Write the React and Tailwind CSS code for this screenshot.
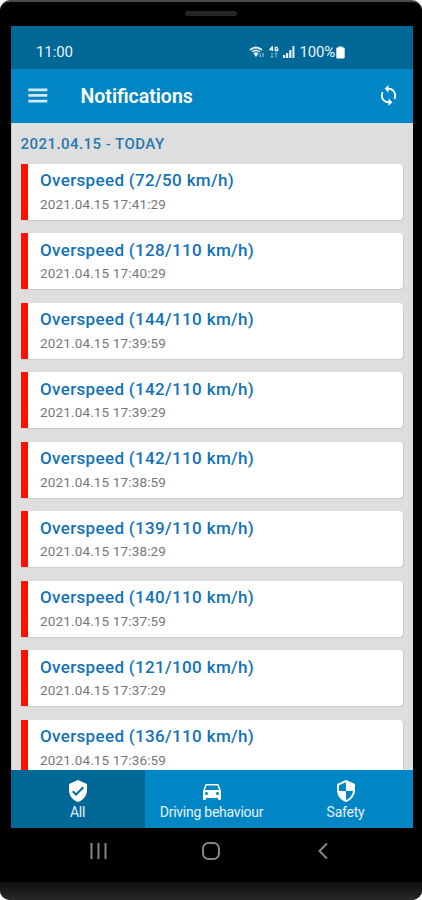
import React, { useState } from 'react';
import { MdLoop, MdVerifiedUser, MdDirectionsCar, MdSecurity } from 'react-icons/md';

const notifications = [
    { id: 1, speed: '72/50', time: '2021.04.15 17:41:29' },
    { id: 2, speed: '128/110', time: '2021.04.15 17:40:29' },
    { id: 3, speed: '144/110', time: '2021.04.15 17:39:59' },
    { id: 4, speed: '142/110', time: '2021.04.15 17:39:29' },
    { id: 5, speed: '142/110', time: '2021.04.15 17:38:59' },
    { id: 6, speed: '139/110', time: '2021.04.15 17:38:29' },
    { id: 7, speed: '140/110', time: '2021.04.15 17:37:59' },
    { id: 8, speed: '121/100', time: '2021.04.15 17:37:29' },
    { id: 9, speed: '136/110', time: '2021.04.15 17:36:59' },
];

const tabs = [
    { id: 'all', label: 'All', Icon: MdVerifiedUser },
    { id: 'driving', label: 'Driving behaviour', Icon: MdDirectionsCar },
    { id: 'safety', label: 'Safety', Icon: MdSecurity },
];

const StatusBar = () => (
    <div className="flex h-[42.5px] shrink-0 items-end justify-between bg-[#006896] pr-[67.5px] pb-[7.5px] pl-[25.5px] text-[15px] leading-[18px] text-[#eaf3f8]">
        <span className="tracking-[-0.1px]">11:00</span>
        <div className="flex items-center">
            {/* wifi */}
            <svg className="mr-[4px] h-3 w-4" viewBox="0 0 16 12" fill="none" stroke="#e3eef5">
                <path d="M1 4Q7 -1 13 4" strokeWidth="1.8" />
                <path d="M3.2 5.8Q7 2.9 10.8 5.8" strokeWidth="1.6" />
                <path d="M4.8 7.4Q7 5.8 9.2 7.4L7 10.5Z" fill="#e3eef5" strokeWidth="0.8" />
                <path d="M11.3 7.5v4M14 11V7" stroke="#78aeca" strokeWidth="1.5" />
            </svg>
            {/* 4G data */}
            <svg className="mr-[4px] h-3 w-[10px]" viewBox="0 0 10 12" fill="none" stroke="#e3eef5">
                <path d="M3.3 5V.8L.8 3.6h3.6M8.8 1.3H6.3v3.2h2.5V3H7.6" strokeWidth="1.3" />
                <path d="M3 6.5v5M1.5 10 3 11.5 4.5 10M7 11.5v-5M5.5 8 7 6.5 8.5 8" stroke="#82b4ce" />
            </svg>
            {/* signal */}
            <svg className="mr-[5px] h-3 w-[12px]" viewBox="0 0 12 12" fill="#e3eef5">
                <path d="M0 9h2.2v3H0zM3 7h2.2v5H3zM6.2 4h2.2v8H6.2zM9.4 0h2v12h-2z" />
            </svg>
            <span className="tracking-[-0.2px]">100%</span>
            {/* battery */}
            <svg className="ml-[1px] h-[13px] w-[9px]" viewBox="0 0 9 13" fill="#fff">
                <path d="M2.5.5h4v1h1q1.2 0 1.2 1.2v8.6q0 1.2-1.2 1.2h-6Q.3 12.5.3 11.3V2.7Q.3 1.5 1.5 1.5h1z" />
            </svg>
        </div>
    </div>
);

const NotificationCard = ({ speed, time }) => (
    <div className="flex h-[56px] shrink-0 overflow-hidden rounded-r-[4px] bg-white shadow-[1px_1px_1px_#cacaca]">
        <div className="w-[7.5px] shrink-0 bg-[#ff1000]"></div>
        <div className="pt-[5.5px] pl-[12px]">
            <h3 className="text-[17px] leading-[22px] font-medium tracking-[0.34px] whitespace-nowrap text-[#1272b8]">
                Overspeed ({speed} km/h)
            </h3>
            <p className="mt-[4.5px] text-[13.5px] leading-[17px] tracking-[0.15px] text-[#777]">{time}</p>
        </div>
    </div>
);

const App = () => {
    const [activeTab, setActiveTab] = useState('all');

    return (
        <div className="h-[900px] w-[422px] bg-white font-[Roboto,sans-serif]">
            <div className="flex h-full flex-col overflow-hidden rounded-[10px] border-t-2 border-[#4b4b4b] bg-black">
                <div className="flex h-6 shrink-0 justify-center pt-[9px]">
                    <div className="h-[5px] w-[52px] rounded-sm bg-[#262626]"></div>
                </div>

                <div className="mr-[9.5px] ml-[10.5px] flex h-[802px] shrink-0 flex-col overflow-hidden">
                    <StatusBar />
                    <header className="flex h-[54.5px] shrink-0 items-center bg-[#0086c5] pr-[12.5px] pl-[17.5px] text-white">
                        <button aria-label="Menu">
                            <svg className="h-[15px] w-[20px]" viewBox="0 0 20 15" fill="#d3e8f4">
                                <path d="M.3.5h19v2.7H.3zM.3 6.100h19v2.7H.3zM.3 11.7h19v2.7H.3z" />
                            </svg>
                        </button>
                        <h1 className="mt-[3px] ml-[32.5px] grow text-[19.5px] leading-6 font-semibold">Notifications</h1>
                        <button aria-label="Refresh">
                            <MdLoop className="size-[23px]" />
                        </button>
                    </header>

                    <main className="flex h-[647px] shrink-0 flex-col overflow-hidden border-l border-[#c8c8c8] bg-[#dedede] pr-[9.5px] pl-[9px]">
                        <h2 className="mt-[11px] mb-[9.5px] h-5 shrink-0 text-[15px] leading-5 font-medium tracking-[0.45px] text-[#2878b1]">
                            2021.04.15 - TODAY
                        </h2>
                        <div className="flex flex-col gap-[13.5px]">
                            {notifications.map((item) => (
                                <NotificationCard key={item.id} speed={item.speed} time={item.time} />
                            ))}
                        </div>
                    </main>

                    <nav className="grid h-[58px] shrink-0 grid-cols-3 bg-[#0086c5] text-[#e6f2f9]">
                        {tabs.map(({ id, label, Icon }) => (
                            <button
                                key={id}
                                onClick={() => setActiveTab(id)}
                                className={'flex flex-col items-center pt-[8.5px] ' + (activeTab === id ? 'bg-[#006896]' : '')}
                            >
                                <Icon className="size-6 shrink-0 text-white" />
                                <span className="mt-px text-[14px] leading-[17px] tracking-[-0.25px] whitespace-nowrap">{label}</span>
                            </button>
                        ))}
                    </nav>
                </div>

                {/* system navigation */}
                <div className="flex h-[54px] shrink-0 items-start justify-between pt-[13px] pr-[89px] pl-[88px]">
                    <svg className="size-5" viewBox="0 0 20 20" stroke="#858585" strokeWidth="2">
                        <path d="M3.5 2v16M10.5 2v16M17.5 2v16" />
                    </svg>
                    <svg className="size-5" viewBox="0 0 20 20" fill="none" stroke="#858585" strokeWidth="2">
                        <rect x="2" y="2" width="16" height="16" rx="5.5" />
                    </svg>
                    <svg className="size-5" viewBox="0 0 20 20" fill="none" stroke="#858585" strokeWidth="2">
                        <path d="M14 2.5 6.5 10l7.5 7.5" />
                    </svg>
                </div>
                <div className="grow bg-linear-to-b from-[#101010] to-[#292929]"></div>
            </div>
        </div>
    );
};

export default App;
